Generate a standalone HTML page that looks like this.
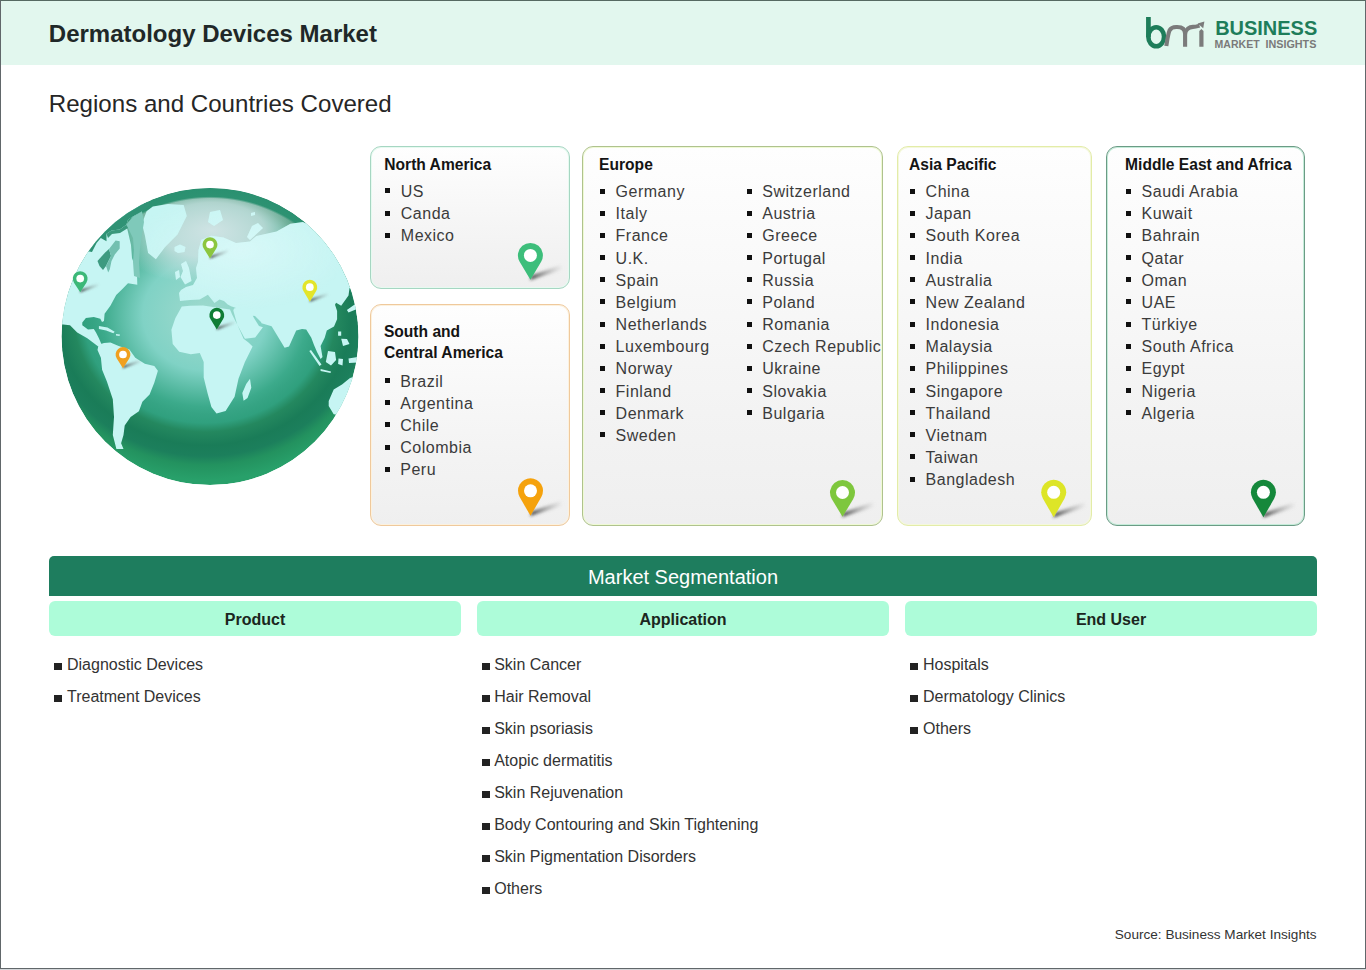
<!DOCTYPE html>
<html><head><meta charset="utf-8">
<style>
html,body{margin:0;padding:0;}
body{width:1366px;height:970px;position:relative;overflow:hidden;background:#d3d6d9;font-family:"Liberation Sans",sans-serif;}
#frame{position:absolute;left:0;top:0;width:1364px;height:967px;border:1px solid #61676a;border-top-color:#566a62;background:#fff;overflow:hidden;}
.abs{position:absolute;white-space:nowrap;line-height:1;}
#hdr{position:absolute;left:0;top:0;width:1364px;height:64px;background:#e2f7ee;}
.card{position:absolute;box-sizing:border-box;border:1px solid #a8dcc4;border-radius:11px;background:linear-gradient(180deg,#fefefe 0%,#f3f3f3 70%,#efefef 100%);}
.ch{position:absolute;font-weight:bold;font-size:15.6px;line-height:1;color:#141414;white-space:nowrap;}
.li{position:absolute;font-size:16px;letter-spacing:0.5px;line-height:1;color:#3b3b3b;white-space:nowrap;}
.bl{position:absolute;width:5px;height:5px;background:#111;}
.sq{position:absolute;width:7.5px;height:7px;background:#222;}
.si{position:absolute;font-size:16px;line-height:1;color:#333;white-space:nowrap;}
.lb{position:absolute;top:601px;height:35px;width:412px;background:#adfcd9;border-radius:6px;}
.lbt{position:absolute;font-weight:bold;font-size:16px;line-height:1;color:#1b2620;white-space:nowrap;width:412px;text-align:center;}
</style></head>
<body>
<div id="frame">
  <div id="hdr"></div>
</div>
<div class="abs" style="left:48.8px;top:22.2px;font-size:24px;font-weight:bold;color:#1f2828;">Dermatology Devices Market</div>
<div class="abs" style="left:48.8px;top:91.6px;font-size:24.1px;color:#262626;">Regions and Countries Covered</div>
<svg style="position:absolute;left:0;top:0" width="1366" height="64" viewBox="0 0 1366 64">
  <g fill="none" stroke-linecap="butt">
    <rect x="1146.06" y="17" width="4.7" height="20" fill="#1e7d5a"/>
    <ellipse cx="1156.2" cy="36.75" rx="7.85" ry="9.55" stroke="#1e7d5a" stroke-width="4.6"/>
    <path d="M1166.3 46 C1167.3 40 1168 34 1169.5 30.5 C1171.5 26.5 1174.5 27 1177.2 27 C1182 27 1185.1 29 1185.1 34 L1185.1 46.8" stroke="#7b7b7b" stroke-width="4.1"/>
    <path d="M1185.1 34 C1185.6 29 1189.5 27 1193 26.9 C1196 26.8 1197.5 26.2 1199.5 25.6" stroke="#7b7b7b" stroke-width="4.1"/>
    <path d="M1197.6 23.4 L1204.4 21.5 L1203.2 28.2 Z" fill="#7b7b7b"/>
    <path d="M1199.3 46.8 L1199.3 31 L1201.4 28.9 L1203.5 31 L1203.5 46.8 Z" fill="#7b7b7b"/>
  </g>
  <text x="1215.2" y="34.8" font-family="Liberation Sans" font-weight="bold" font-size="21" fill="#1e7d5a" textLength="102" lengthAdjust="spacingAndGlyphs">BUSINESS</text>
  <text x="1214.6" y="47.6" font-family="Liberation Sans" font-weight="bold" font-size="11.7" fill="#7a7a7a" textLength="45" lengthAdjust="spacingAndGlyphs">MARKET</text>
  <text x="1265.4" y="47.6" font-family="Liberation Sans" font-weight="bold" font-size="11.7" fill="#7a7a7a" textLength="51" lengthAdjust="spacingAndGlyphs">INSIGHTS</text>
</svg>

<div class="card" style="left:370px;top:146px;width:200px;height:143px;border-color:#a6d6c2;box-shadow:inset 0 0 0 1px #e6faf0"></div>
<div class="card" style="left:370px;top:304px;width:200px;height:222px;border-color:#efc99c;box-shadow:inset 0 0 0 1px #fcf1de"></div>
<div class="card" style="left:582px;top:146px;width:301px;height:380px;border-color:#afc28e;box-shadow:inset 0 0 0 1px #effad4"></div>
<div class="card" style="left:897px;top:146px;width:195px;height:380px;border-color:#e3eca8;box-shadow:inset 0 0 0 1px #f4f8dc"></div>
<div class="card" style="left:1106px;top:146px;width:199px;height:380px;border-color:#6b9b85;box-shadow:inset 0 0 0 1px #c4ecd9"></div>
<div class="ch" style="left:384.3px;top:157.29px">North America</div>
<div class="bl" style="left:385.2px;top:188.40px"></div>
<div class="li" style="left:400.8px;top:183.96px">US</div>
<div class="bl" style="left:385.2px;top:210.55px"></div>
<div class="li" style="left:400.8px;top:206.11px">Canda</div>
<div class="bl" style="left:385.2px;top:232.70px"></div>
<div class="li" style="left:400.8px;top:228.26px">Mexico</div>
<div class="ch" style="left:383.9px;top:324.09px">South and</div>
<div class="ch" style="left:383.9px;top:344.69px">Central America</div>
<div class="bl" style="left:384.8px;top:378.10px"></div>
<div class="li" style="left:400.3px;top:373.66px">Brazil</div>
<div class="bl" style="left:384.8px;top:400.25px"></div>
<div class="li" style="left:400.3px;top:395.81px">Argentina</div>
<div class="bl" style="left:384.8px;top:422.40px"></div>
<div class="li" style="left:400.3px;top:417.96px">Chile</div>
<div class="bl" style="left:384.8px;top:444.55px"></div>
<div class="li" style="left:400.3px;top:440.11px">Colombia</div>
<div class="bl" style="left:384.8px;top:466.70px"></div>
<div class="li" style="left:400.3px;top:462.26px">Peru</div>
<div class="ch" style="left:599.1px;top:157.29px">Europe</div>
<div class="bl" style="left:599.8px;top:188.60px"></div>
<div class="li" style="left:615.6px;top:184.16px">Germany</div>
<div class="bl" style="left:599.8px;top:210.75px"></div>
<div class="li" style="left:615.6px;top:206.31px">Italy</div>
<div class="bl" style="left:599.8px;top:232.90px"></div>
<div class="li" style="left:615.6px;top:228.46px">France</div>
<div class="bl" style="left:599.8px;top:255.05px"></div>
<div class="li" style="left:615.6px;top:250.61px">U.K.</div>
<div class="bl" style="left:599.8px;top:277.20px"></div>
<div class="li" style="left:615.6px;top:272.76px">Spain</div>
<div class="bl" style="left:599.8px;top:299.35px"></div>
<div class="li" style="left:615.6px;top:294.91px">Belgium</div>
<div class="bl" style="left:599.8px;top:321.50px"></div>
<div class="li" style="left:615.6px;top:317.06px">Netherlands</div>
<div class="bl" style="left:599.8px;top:343.65px"></div>
<div class="li" style="left:615.6px;top:339.21px">Luxembourg</div>
<div class="bl" style="left:599.8px;top:365.80px"></div>
<div class="li" style="left:615.6px;top:361.36px">Norway</div>
<div class="bl" style="left:599.8px;top:387.95px"></div>
<div class="li" style="left:615.6px;top:383.51px">Finland</div>
<div class="bl" style="left:599.8px;top:410.10px"></div>
<div class="li" style="left:615.6px;top:405.66px">Denmark</div>
<div class="bl" style="left:599.8px;top:432.25px"></div>
<div class="li" style="left:615.6px;top:427.81px">Sweden</div>
<div class="bl" style="left:746.6px;top:188.60px"></div>
<div class="li" style="left:762.3px;top:184.16px">Switzerland</div>
<div class="bl" style="left:746.6px;top:210.75px"></div>
<div class="li" style="left:762.3px;top:206.31px">Austria</div>
<div class="bl" style="left:746.6px;top:232.90px"></div>
<div class="li" style="left:762.3px;top:228.46px">Greece</div>
<div class="bl" style="left:746.6px;top:255.05px"></div>
<div class="li" style="left:762.3px;top:250.61px">Portugal</div>
<div class="bl" style="left:746.6px;top:277.20px"></div>
<div class="li" style="left:762.3px;top:272.76px">Russia</div>
<div class="bl" style="left:746.6px;top:299.35px"></div>
<div class="li" style="left:762.3px;top:294.91px">Poland</div>
<div class="bl" style="left:746.6px;top:321.50px"></div>
<div class="li" style="left:762.3px;top:317.06px">Romania</div>
<div class="bl" style="left:746.6px;top:343.65px"></div>
<div class="li" style="left:762.3px;top:339.21px">Czech Republic</div>
<div class="bl" style="left:746.6px;top:365.80px"></div>
<div class="li" style="left:762.3px;top:361.36px">Ukraine</div>
<div class="bl" style="left:746.6px;top:387.95px"></div>
<div class="li" style="left:762.3px;top:383.51px">Slovakia</div>
<div class="bl" style="left:746.6px;top:410.10px"></div>
<div class="li" style="left:762.3px;top:405.66px">Bulgaria</div>
<div class="ch" style="left:909.0px;top:157.29px">Asia Pacific</div>
<div class="bl" style="left:910.4px;top:188.60px"></div>
<div class="li" style="left:925.6px;top:184.16px">China</div>
<div class="bl" style="left:910.4px;top:210.75px"></div>
<div class="li" style="left:925.6px;top:206.31px">Japan</div>
<div class="bl" style="left:910.4px;top:232.90px"></div>
<div class="li" style="left:925.6px;top:228.46px">South Korea</div>
<div class="bl" style="left:910.4px;top:255.05px"></div>
<div class="li" style="left:925.6px;top:250.61px">India</div>
<div class="bl" style="left:910.4px;top:277.20px"></div>
<div class="li" style="left:925.6px;top:272.76px">Australia</div>
<div class="bl" style="left:910.4px;top:299.35px"></div>
<div class="li" style="left:925.6px;top:294.91px">New Zealand</div>
<div class="bl" style="left:910.4px;top:321.50px"></div>
<div class="li" style="left:925.6px;top:317.06px">Indonesia</div>
<div class="bl" style="left:910.4px;top:343.65px"></div>
<div class="li" style="left:925.6px;top:339.21px">Malaysia</div>
<div class="bl" style="left:910.4px;top:365.80px"></div>
<div class="li" style="left:925.6px;top:361.36px">Philippines</div>
<div class="bl" style="left:910.4px;top:387.95px"></div>
<div class="li" style="left:925.6px;top:383.51px">Singapore</div>
<div class="bl" style="left:910.4px;top:410.10px"></div>
<div class="li" style="left:925.6px;top:405.66px">Thailand</div>
<div class="bl" style="left:910.4px;top:432.25px"></div>
<div class="li" style="left:925.6px;top:427.81px">Vietnam</div>
<div class="bl" style="left:910.4px;top:454.40px"></div>
<div class="li" style="left:925.6px;top:449.96px">Taiwan</div>
<div class="bl" style="left:910.4px;top:476.55px"></div>
<div class="li" style="left:925.6px;top:472.11px">Bangladesh</div>
<div class="ch" style="left:1125.1px;top:157.29px">Middle East and Africa</div>
<div class="bl" style="left:1125.7px;top:188.60px"></div>
<div class="li" style="left:1141.6px;top:184.16px">Saudi Arabia</div>
<div class="bl" style="left:1125.7px;top:210.75px"></div>
<div class="li" style="left:1141.6px;top:206.31px">Kuwait</div>
<div class="bl" style="left:1125.7px;top:232.90px"></div>
<div class="li" style="left:1141.6px;top:228.46px">Bahrain</div>
<div class="bl" style="left:1125.7px;top:255.05px"></div>
<div class="li" style="left:1141.6px;top:250.61px">Qatar</div>
<div class="bl" style="left:1125.7px;top:277.20px"></div>
<div class="li" style="left:1141.6px;top:272.76px">Oman</div>
<div class="bl" style="left:1125.7px;top:299.35px"></div>
<div class="li" style="left:1141.6px;top:294.91px">UAE</div>
<div class="bl" style="left:1125.7px;top:321.50px"></div>
<div class="li" style="left:1141.6px;top:317.06px">Türkiye</div>
<div class="bl" style="left:1125.7px;top:343.65px"></div>
<div class="li" style="left:1141.6px;top:339.21px">South Africa</div>
<div class="bl" style="left:1125.7px;top:365.80px"></div>
<div class="li" style="left:1141.6px;top:361.36px">Egypt</div>
<div class="bl" style="left:1125.7px;top:387.95px"></div>
<div class="li" style="left:1141.6px;top:383.51px">Nigeria</div>
<div class="bl" style="left:1125.7px;top:410.10px"></div>
<div class="li" style="left:1141.6px;top:405.66px">Algeria</div>
<svg style="position:absolute;left:0;top:0" width="1366" height="970" viewBox="0 0 1366 970"><defs><linearGradient id="shg" x1="0" y1="0" x2="1" y2="0"><stop offset="0" stop-color="#222" stop-opacity="0.85"/><stop offset="0.45" stop-color="#555" stop-opacity="0.45"/><stop offset="1" stop-color="#888" stop-opacity="0"/></linearGradient><filter id="blur12" x="-50%" y="-50%" width="200%" height="200%"><feGaussianBlur stdDeviation="1.5"/></filter><filter id="blur7" x="-50%" y="-50%" width="200%" height="200%"><feGaussianBlur stdDeviation="0.8"/></filter></defs><path d="M529.90 280.30 L531.90 275.30 L561.40 264.80 L563.40 269.30 Z" fill="url(#shg)" filter="url(#blur12)"/><path d="M530.40 279.80 L519.66 261.80 A12.5 12.5 0 1 1 541.14 261.80 Z" fill="#3dbe7b"/><circle cx="530.40" cy="255.40" r="6.50" fill="#fff"/><path d="M530.00 516.30 L532.00 511.30 L561.50 500.80 L563.50 505.30 Z" fill="url(#shg)" filter="url(#blur12)"/><path d="M530.50 515.80 L519.67 497.05 A12.5 12.5 0 1 1 541.33 497.05 Z" fill="#f5a20c"/><circle cx="530.50" cy="490.80" r="6.50" fill="#fff"/><path d="M842.00 517.30 L844.00 512.30 L873.50 501.80 L875.50 506.30 Z" fill="url(#shg)" filter="url(#blur12)"/><path d="M842.50 516.80 L831.78 498.93 A12.5 12.5 0 1 1 853.22 498.93 Z" fill="#7ec73d"/><circle cx="842.50" cy="492.50" r="6.50" fill="#fff"/><path d="M1053.20 517.80 L1055.20 512.80 L1084.70 502.30 L1086.70 506.80 Z" fill="url(#shg)" filter="url(#blur12)"/><path d="M1053.70 517.30 L1042.87 498.55 A12.5 12.5 0 1 1 1064.53 498.55 Z" fill="#dde527"/><circle cx="1053.70" cy="492.30" r="6.50" fill="#fff"/><path d="M1262.90 517.80 L1264.90 512.80 L1294.40 502.30 L1296.40 506.80 Z" fill="url(#shg)" filter="url(#blur12)"/><path d="M1263.40 517.30 L1252.57 498.55 A12.5 12.5 0 1 1 1274.23 498.55 Z" fill="#15883b"/><circle cx="1263.40" cy="492.30" r="6.50" fill="#fff"/></svg>
<svg style="position:absolute;left:0;top:0" width="420" height="520" viewBox="0 0 420 520">
<defs>
<clipPath id="gclip"><circle cx="210" cy="336.5" r="148.5"/></clipPath>
<radialGradient id="ocean" gradientUnits="userSpaceOnUse" cx="0" cy="0" r="1" gradientTransform="translate(205 315) scale(185 165)"><stop offset="0" stop-color="#a0dace"/><stop offset="0.336" stop-color="#80d2c5"/><stop offset="0.555" stop-color="#3caa8b"/><stop offset="0.6" stop-color="#36a484"/><stop offset="0.655" stop-color="#30a07e"/><stop offset="0.709" stop-color="#24885f"/><stop offset="0.79" stop-color="#1a7c58"/><stop offset="0.855" stop-color="#1c7f5c"/><stop offset="0.909" stop-color="#23925f"/><stop offset="1" stop-color="#28a06a"/></radialGradient>
<linearGradient id="botl" gradientUnits="userSpaceOnUse" x1="0" y1="450" x2="0" y2="486"><stop offset="0" stop-color="#2aa36c" stop-opacity="0"/><stop offset="1" stop-color="#2aa86e" stop-opacity="1"/></linearGradient>
<radialGradient id="rim" gradientUnits="userSpaceOnUse" cx="210" cy="350" r="162"><stop offset="0" stop-color="#2a9170" stop-opacity="0"/><stop offset="0.935" stop-color="#2a9170" stop-opacity="0"/><stop offset="0.948" stop-color="#2d9272" stop-opacity="1"/><stop offset="1" stop-color="#2a9070" stop-opacity="1"/></radialGradient>
<radialGradient id="hl" gradientUnits="userSpaceOnUse" cx="0" cy="0" r="1" gradientTransform="translate(212 230) scale(105 55)"><stop offset="0" stop-color="#d6e6e8" stop-opacity="0.95"/><stop offset="0.5" stop-color="#d2e4e6" stop-opacity="0.8"/><stop offset="1" stop-color="#d0e2e4" stop-opacity="0"/></radialGradient>
<radialGradient id="lhl" gradientUnits="userSpaceOnUse" cx="0" cy="0" r="1" gradientTransform="translate(240 250) scale(110 60)"><stop offset="0" stop-color="#e6fbfc" stop-opacity="0.55"/><stop offset="1" stop-color="#e6fbfc" stop-opacity="0"/></radialGradient>
<mask id="landmask"><path fill="#fff" d="M40.0 180.0 L150.0 180.0 L142.0 211.5 L132.9 216.4 L128.0 219.7 L126.3 224.7 L128.0 232.0 L131.0 245.0 L132.0 258.0 L137.0 272.0 L137.3 284.7 L128.0 283.2 L121.9 289.4 L116.2 295.0 L110.4 305.8 L104.6 313.8 L104.0 321.0 L102.0 322.0 L100.3 318.8 L93.8 317.0 L85.9 318.1 L82.3 322.4 L82.3 325.3 L88.0 329.6 L93.8 328.9 L96.0 332.5 L98.9 338.3 L101.7 344.8 L98.6 344.7 L98.9 347.0 L87.3 338.3 L77.2 332.5 L70.0 325.3 L40.0 322.0 Z M152.8 206.6 L168.0 204.0 L183.7 205.1 L186.8 216.0 L177.5 234.5 L165.1 246.9 L155.9 259.2 L148.1 253.0 L145.0 236.0 L142.0 223.7 L146.6 211.3 Z M174.5 247.0 L180.0 244.5 L185.5 247.0 L184.5 252.0 L178.0 253.0 L174.5 251.0 Z M181.0 264.0 L186.0 261.0 L189.0 268.0 L191.5 281.0 L185.0 284.5 L180.5 277.0 L183.0 271.0 Z M175.0 272.0 L179.0 270.0 L180.0 277.0 L176.0 280.0 Z M179.0 293.0 L180.0 301.0 L190.0 300.0 L199.7 299.6 L207.9 294.7 L214.5 302.9 L219.5 299.6 L224.0 301.0 L227.7 304.6 L231.0 306.2 L236.0 307.9 L234.0 308.5 L233.3 310.5 L237.2 324.6 L244.9 338.8 L255.2 337.5 L262.9 327.2 L259.0 326.0 L254.0 318.0 L252.8 315.7 L255.0 316.0 L261.0 322.0 L261.5 323.3 L271.6 326.2 L284.6 347.8 L289.0 346.4 L296.2 330.5 L302.0 329.0 L306.2 329.5 L311.3 337.7 L314.0 345.0 L317.0 352.0 L320.6 359.0 L322.5 357.0 L320.6 346.0 L324.7 337.7 L326.8 330.5 L334.0 326.4 L337.1 319.2 L337.1 310.9 L335.0 304.7 L336.1 302.7 L341.2 305.8 L348.5 295.5 L349.5 288.2 L365.0 280.0 L365.0 200.0 L310.5 225.2 L302.8 222.1 L290.4 223.7 L276.5 231.4 L256.4 236.0 L250.0 241.5 L236.0 243.1 L223.6 237.4 L211.2 235.7 L201.3 239.8 L198.5 250.0 L198.0 262.0 L196.0 268.0 L197.0 278.0 L193.0 285.0 L186.0 287.0 L181.0 290.0 Z M181.8 306.6 L175.3 318.2 L171.4 329.8 L172.7 344.0 L179.2 351.7 L190.8 354.3 L199.8 353.0 L203.7 362.0 L203.7 377.5 L207.5 392.9 L211.4 407.1 L216.5 413.6 L225.6 411.0 L234.6 396.8 L238.5 378.8 L244.9 362.0 L252.6 346.5 L248.8 342.7 L243.6 338.8 L237.2 324.6 L232.0 314.3 L230.0 309.5 L219.5 307.9 L203.0 305.4 L190.0 305.8 Z M250.0 378.8 L251.3 387.8 L247.5 398.1 L243.6 400.7 L242.3 393.0 L246.2 383.9 Z M98.6 344.7 L104.0 343.0 L110.4 342.4 L118.7 345.9 L129.4 349.5 L135.3 357.8 L144.8 363.7 L154.3 366.1 L157.9 370.8 L154.3 382.7 L149.6 394.6 L142.4 401.7 L138.9 411.2 L130.6 417.1 L124.7 425.4 L123.5 434.9 L121.1 443.2 L123.5 449.1 L116.4 449.1 L112.8 434.9 L114.0 417.1 L112.8 399.3 L106.9 381.5 L102.1 369.7 L100.9 357.8 L97.5 350.0 Z M328.7 401.0 L333.7 389.4 L342.0 384.5 L350.0 378.0 L370.0 372.0 L370.0 420.0 L333.7 414.2 L328.7 406.0 Z M338.1 331.5 L341.2 331.5 L341.2 335.7 L338.1 335.7 Z M341.2 338.8 L347.0 339.0 L349.5 344.0 L343.0 346.0 Z M309.3 351.0 L311.0 350.0 L321.5 364.5 L319.5 366.0 Z M328.0 351.0 L335.0 352.0 L336.1 360.0 L331.0 365.6 L325.8 362.0 Z M338.5 358.4 L343.0 359.0 L342.5 365.6 L338.1 364.0 Z M348.5 358.4 L357.7 357.0 L358.0 362.5 L349.0 363.0 Z M320.6 369.0 L331.0 371.5 L330.5 373.0 L320.6 371.0 Z M355.7 303.7 L357.0 308.9 L348.5 312.5 L346.9 309.9 Z M210.0 212.0 L220.0 210.0 L223.0 220.0 L214.0 226.0 L208.0 222.0 Z M252.0 226.0 L258.0 223.0 L263.0 228.0 L250.0 240.0 L247.0 237.0 Z M251.0 213.0 L255.0 212.0 L255.0 215.0 L251.0 216.0 Z"/></mask>
</defs>
<g clip-path="url(#gclip)">
<circle cx="210" cy="336.5" r="148.5" fill="url(#ocean)"/>
<ellipse cx="212" cy="230" rx="105" ry="55" fill="url(#hl)"/>
<circle cx="210" cy="336.5" r="148.5" fill="url(#rim)"/>
<path fill="#c6f5f3" d="M40.0 180.0 L150.0 180.0 L142.0 211.5 L132.9 216.4 L128.0 219.7 L126.3 224.7 L128.0 232.0 L131.0 245.0 L132.0 258.0 L137.0 272.0 L137.3 284.7 L128.0 283.2 L121.9 289.4 L116.2 295.0 L110.4 305.8 L104.6 313.8 L104.0 321.0 L102.0 322.0 L100.3 318.8 L93.8 317.0 L85.9 318.1 L82.3 322.4 L82.3 325.3 L88.0 329.6 L93.8 328.9 L96.0 332.5 L98.9 338.3 L101.7 344.8 L98.6 344.7 L98.9 347.0 L87.3 338.3 L77.2 332.5 L70.0 325.3 L40.0 322.0 Z M152.8 206.6 L168.0 204.0 L183.7 205.1 L186.8 216.0 L177.5 234.5 L165.1 246.9 L155.9 259.2 L148.1 253.0 L145.0 236.0 L142.0 223.7 L146.6 211.3 Z M174.5 247.0 L180.0 244.5 L185.5 247.0 L184.5 252.0 L178.0 253.0 L174.5 251.0 Z M181.0 264.0 L186.0 261.0 L189.0 268.0 L191.5 281.0 L185.0 284.5 L180.5 277.0 L183.0 271.0 Z M175.0 272.0 L179.0 270.0 L180.0 277.0 L176.0 280.0 Z M179.0 293.0 L180.0 301.0 L190.0 300.0 L199.7 299.6 L207.9 294.7 L214.5 302.9 L219.5 299.6 L224.0 301.0 L227.7 304.6 L231.0 306.2 L236.0 307.9 L234.0 308.5 L233.3 310.5 L237.2 324.6 L244.9 338.8 L255.2 337.5 L262.9 327.2 L259.0 326.0 L254.0 318.0 L252.8 315.7 L255.0 316.0 L261.0 322.0 L261.5 323.3 L271.6 326.2 L284.6 347.8 L289.0 346.4 L296.2 330.5 L302.0 329.0 L306.2 329.5 L311.3 337.7 L314.0 345.0 L317.0 352.0 L320.6 359.0 L322.5 357.0 L320.6 346.0 L324.7 337.7 L326.8 330.5 L334.0 326.4 L337.1 319.2 L337.1 310.9 L335.0 304.7 L336.1 302.7 L341.2 305.8 L348.5 295.5 L349.5 288.2 L365.0 280.0 L365.0 200.0 L310.5 225.2 L302.8 222.1 L290.4 223.7 L276.5 231.4 L256.4 236.0 L250.0 241.5 L236.0 243.1 L223.6 237.4 L211.2 235.7 L201.3 239.8 L198.5 250.0 L198.0 262.0 L196.0 268.0 L197.0 278.0 L193.0 285.0 L186.0 287.0 L181.0 290.0 Z M181.8 306.6 L175.3 318.2 L171.4 329.8 L172.7 344.0 L179.2 351.7 L190.8 354.3 L199.8 353.0 L203.7 362.0 L203.7 377.5 L207.5 392.9 L211.4 407.1 L216.5 413.6 L225.6 411.0 L234.6 396.8 L238.5 378.8 L244.9 362.0 L252.6 346.5 L248.8 342.7 L243.6 338.8 L237.2 324.6 L232.0 314.3 L230.0 309.5 L219.5 307.9 L203.0 305.4 L190.0 305.8 Z M250.0 378.8 L251.3 387.8 L247.5 398.1 L243.6 400.7 L242.3 393.0 L246.2 383.9 Z M98.6 344.7 L104.0 343.0 L110.4 342.4 L118.7 345.9 L129.4 349.5 L135.3 357.8 L144.8 363.7 L154.3 366.1 L157.9 370.8 L154.3 382.7 L149.6 394.6 L142.4 401.7 L138.9 411.2 L130.6 417.1 L124.7 425.4 L123.5 434.9 L121.1 443.2 L123.5 449.1 L116.4 449.1 L112.8 434.9 L114.0 417.1 L112.8 399.3 L106.9 381.5 L102.1 369.7 L100.9 357.8 L97.5 350.0 Z M328.7 401.0 L333.7 389.4 L342.0 384.5 L350.0 378.0 L370.0 372.0 L370.0 420.0 L333.7 414.2 L328.7 406.0 Z M338.1 331.5 L341.2 331.5 L341.2 335.7 L338.1 335.7 Z M341.2 338.8 L347.0 339.0 L349.5 344.0 L343.0 346.0 Z M309.3 351.0 L311.0 350.0 L321.5 364.5 L319.5 366.0 Z M328.0 351.0 L335.0 352.0 L336.1 360.0 L331.0 365.6 L325.8 362.0 Z M338.5 358.4 L343.0 359.0 L342.5 365.6 L338.1 364.0 Z M348.5 358.4 L357.7 357.0 L358.0 362.5 L349.0 363.0 Z M320.6 369.0 L331.0 371.5 L330.5 373.0 L320.6 371.0 Z M355.7 303.7 L357.0 308.9 L348.5 312.5 L346.9 309.9 Z M210.0 212.0 L220.0 210.0 L223.0 220.0 L214.0 226.0 L208.0 222.0 Z M252.0 226.0 L258.0 223.0 L263.0 228.0 L250.0 240.0 L247.0 237.0 Z M251.0 213.0 L255.0 212.0 L255.0 215.0 L251.0 216.0 Z"/>
<ellipse cx="240" cy="250" rx="110" ry="60" fill="url(#lhl)" mask="url(#landmask)"/>
<path fill="#2f9274" d="M80.0 250.0 L142.0 190.0 L150.0 205.0 L142.0 211.5 L132.9 216.4 L128.0 219.7 L126.3 224.7 L119.7 229.6 L111.5 230.5 L106.5 233.8 L106.5 241.2 L100.8 237.9 L96.6 243.0 L92.0 252.0 Z"/>
<path fill="#7fc9ba" d="M126.3 224.7 L132.9 216.4 L142.0 211.5 L144.0 222.0 L142.0 234.0 L140.0 248.0 L139.0 262.0 L140.0 278.0 L134.0 276.0 L133.0 262.0 L134.0 250.0 L133.0 238.0 L129.0 230.0 Z"/>
<path fill="#3a987c" d="M106.5 233.8 L111.5 230.5 L119.7 229.6 L126.3 224.7 L128.0 228.0 L120.0 233.0 L112.0 234.0 L108.0 238.0 Z"/>
<path fill="#3d9a80" d="M97.5 261.0 L104.9 252.7 L109.0 249.0 L111.0 256.0 L106.0 266.0 L103.0 270.0 L99.5 266.0 Z"/>
<path fill="#72c0b0" d="M109.0 249.0 L115.6 240.4 L119.7 241.2 L119.7 248.6 L114.8 254.4 L111.5 261.0 L109.8 269.2 L108.2 272.5 L106.0 266.0 L111.0 256.0 Z"/>
<path fill="#c6f5f3" d="M98.9 326.0 L107.5 327.5 L114.7 331.8 L113.3 333.2 L106.1 330.4 L98.9 328.9 Z"/>
<path fill="#c6f5f3" d="M116.0 334.0 L120.0 334.5 L119.5 336.0 L116.0 335.5 Z"/>
</g>
</svg>
<svg style="position:absolute;left:0;top:0" width="420" height="520" viewBox="0 0 420 520"><path d="M79.90 292.50 L81.09 289.54 L98.55 283.32 L99.74 285.98 Z" fill="url(#shg)" filter="url(#blur7)"/><path d="M80.20 292.20 L73.99 282.63 A7.4 7.4 0 1 1 86.41 282.63 Z" fill="#3cb878"/><circle cx="80.20" cy="278.60" r="3.85" fill="#fff"/><path d="M209.70 258.80 L210.89 255.84 L228.35 249.62 L229.54 252.28 Z" fill="url(#shg)" filter="url(#blur7)"/><path d="M210.00 258.50 L203.74 248.54 A7.4 7.4 0 1 1 216.26 248.54 Z" fill="#8cc63f"/><circle cx="210.00" cy="244.60" r="3.85" fill="#fff"/><path d="M309.50 302.00 L310.69 299.04 L328.15 292.82 L329.34 295.48 Z" fill="url(#shg)" filter="url(#blur7)"/><path d="M309.80 301.70 L303.44 290.98 A7.4 7.4 0 1 1 316.16 290.98 Z" fill="#e3e52a"/><circle cx="309.80" cy="287.20" r="3.85" fill="#fff"/><path d="M216.50 329.90 L217.69 326.94 L235.15 320.72 L236.34 323.38 Z" fill="url(#shg)" filter="url(#blur7)"/><path d="M216.80 329.60 L210.44 318.88 A7.4 7.4 0 1 1 223.16 318.88 Z" fill="#0f7d35"/><circle cx="216.80" cy="315.10" r="3.85" fill="#fff"/><path d="M122.70 368.50 L123.89 365.54 L141.35 359.32 L142.54 361.98 Z" fill="url(#shg)" filter="url(#blur7)"/><path d="M123.00 368.20 L116.77 358.50 A7.4 7.4 0 1 1 129.23 358.50 Z" fill="#f0a01e"/><circle cx="123.00" cy="354.50" r="3.85" fill="#fff"/></svg>
<div style="position:absolute;left:49px;top:556px;width:1268px;height:40px;background:#1e7d5e;border-radius:5px 5px 0 0;"></div>
<div class="abs" style="left:0;width:1366px;text-align:center;top:566.87px;font-size:20px;color:#fff;">Market Segmentation</div>
<div class="lb" style="left:49px"><div class="lbt" style="top:11.36px">Product</div></div>
<div class="lb" style="left:477px"><div class="lbt" style="top:11.36px">Application</div></div>
<div class="lb" style="left:905px"><div class="lbt" style="top:11.36px">End User</div></div>
<div class="sq" style="left:54px;top:662.90px"></div>
<div class="si" style="left:67px;top:657.26px">Diagnostic Devices</div>
<div class="sq" style="left:54px;top:694.90px"></div>
<div class="si" style="left:67px;top:689.26px">Treatment Devices</div>
<div class="sq" style="left:482px;top:662.90px"></div>
<div class="si" style="left:494.2px;top:657.26px">Skin Cancer</div>
<div class="sq" style="left:482px;top:694.90px"></div>
<div class="si" style="left:494.2px;top:689.26px">Hair Removal</div>
<div class="sq" style="left:482px;top:726.90px"></div>
<div class="si" style="left:494.2px;top:721.26px">Skin psoriasis</div>
<div class="sq" style="left:482px;top:758.90px"></div>
<div class="si" style="left:494.2px;top:753.26px">Atopic dermatitis</div>
<div class="sq" style="left:482px;top:790.90px"></div>
<div class="si" style="left:494.2px;top:785.26px">Skin Rejuvenation</div>
<div class="sq" style="left:482px;top:822.90px"></div>
<div class="si" style="left:494.2px;top:817.26px">Body Contouring and Skin Tightening</div>
<div class="sq" style="left:482px;top:854.90px"></div>
<div class="si" style="left:494.2px;top:849.26px">Skin Pigmentation Disorders</div>
<div class="sq" style="left:482px;top:886.90px"></div>
<div class="si" style="left:494.2px;top:881.26px">Others</div>
<div class="sq" style="left:910px;top:662.90px"></div>
<div class="si" style="left:923px;top:657.26px">Hospitals</div>
<div class="sq" style="left:910px;top:694.90px"></div>
<div class="si" style="left:923px;top:689.26px">Dermatology Clinics</div>
<div class="sq" style="left:910px;top:726.90px"></div>
<div class="si" style="left:923px;top:721.26px">Others</div>
<div class="abs" style="left:1114.8px;top:928.29px;font-size:13.6px;color:#333;">Source: Business Market Insights</div>
</body></html>
